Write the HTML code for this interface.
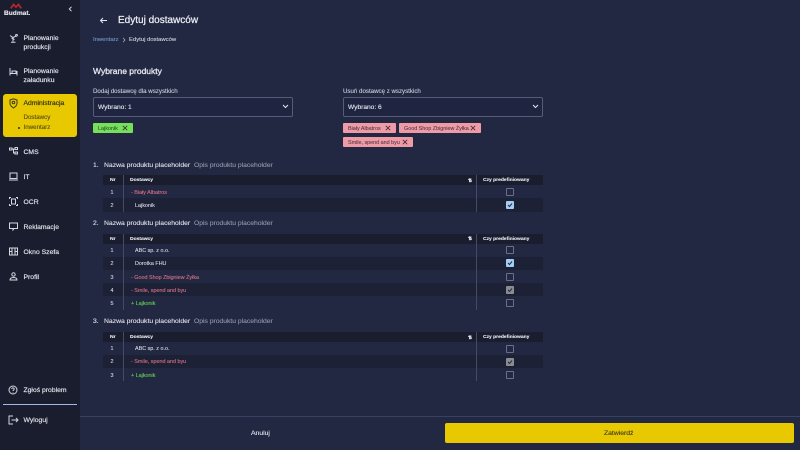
<!DOCTYPE html>
<html lang="pl"><head><meta charset="utf-8"><title>Edytuj dostawców</title>
<style>
*{box-sizing:border-box}
html,body{margin:0;padding:0}
body{width:800px;height:450px;overflow:hidden;background:#222842;font-family:"Liberation Sans",sans-serif;color:#e6e8ef;position:relative}
.a{position:absolute;white-space:nowrap;line-height:1;-webkit-text-stroke:.12px currentColor}
#side{position:absolute;left:0;top:0;width:80px;height:450px;background:#191d2e}
.nav{font-size:6.8px;color:#e4e6ec;left:23.5px;-webkit-text-stroke:.15px currentColor}
.ic{position:absolute;fill:none;stroke:#d5d8e0;stroke-width:1}
.sel{position:absolute;width:200px;height:20px;top:96.5px;border:1px solid #565c78;border-radius:2px;background:#1f2440}
.tag{position:absolute;height:10px;border-radius:1px;color:#5a3a48;font-size:5.4px;line-height:12px;padding-left:5px;background:#ef9ba6;white-space:nowrap;-webkit-text-stroke:.1px currentColor}
.tag svg{position:absolute;top:2px;width:6px;height:6px;fill:none;stroke:#3a2a35;stroke-width:.8}
.row{position:absolute;left:103px;width:440px}
.hd{background:#191d2e;height:10px}
.dk{background:#1d2135}
.h{font-size:4.95px;font-weight:bold;color:#e4e6ec;margin-top:1.5px}
.t{font-size:5.4px;color:#d3d6df;margin-top:1px}
.r{color:#d16f85}.g{color:#66cc55}
.sep{position:absolute;width:1px;background:#454b66}
.cb{position:absolute;left:506px;width:8px;height:8px;border:1px solid #6b7088;border-radius:1px}
.cb.b{background:#a3cdf3;border-color:#a3cdf3}
.cb.x{background:#8b8c90;border-color:#8b8c90}
.cb svg{position:absolute;left:0;top:0;width:6px;height:6px;fill:none;stroke:#222842;stroke-width:1}
.p1{font-size:6.8px;color:#e0e3ea;-webkit-text-stroke:.1px currentColor;margin-top:1.2px}
.p2{font-size:6.75px;color:#8f94a8;margin-top:1.2px}
</style></head><body>

<div id="side"></div>
<svg class="a" style="left:10px;top:3px" width="12" height="6" viewBox="0 0 12 6"><path d="M.8 5.4 L3.5 1.5 L6 4 L8.5 1.5 L11.2 5.4" fill="none" stroke="#b3262e" stroke-width="1.8"/></svg>
<div class="a" style="left:4px;top:10.5px;font-size:6.6px;font-weight:bold;color:#e8e9ee">Budmat.</div>
<svg class="a" style="left:68px;top:6px" width="5" height="6" viewBox="0 0 5 6"><path d="M3.5 .8 L1.3 3 L3.5 5.2" fill="none" stroke="#d5d8e0"/></svg>

<svg class="ic" style="left:9px;top:34px" width="9" height="9" viewBox="0 0 9 9"><circle cx="7.5" cy="1.3" r=".9"/><path d="M1 1.5 L4 3.5 L7 2 M4 3.5 V7.5 M2 8.3 H6.5 M2.5 4 L5.5 5.5"/></svg>
<div class="a nav" style="top:35.5px">Planowanie</div><div class="a nav" style="top:45.3px">produkcji</div>
<svg class="ic" style="left:9px;top:67px" width="9" height="9" viewBox="0 0 9 9"><path d="M1 1 V8.5 M8 4 V8.5 M1 6.5 H8 M3 6.5 V4 H7 V6.5"/></svg>
<div class="a nav" style="top:68.5px">Planowanie</div><div class="a nav" style="top:78px">załadunku</div>

<div style="position:absolute;left:3px;top:94px;width:74px;height:43px;background:#e8c800;border-radius:3px"></div>
<svg class="ic" style="left:9px;top:98px;stroke:#3a3a20" width="9" height="11" viewBox="0 0 9 11"><path d="M1 2 L4.5 .8 L8 2 V5.5 C8 7.5 6 9 4.5 10 C3 9 1 7.5 1 5.5 Z"/><circle cx="4.5" cy="4.5" r="1.3"/></svg>
<div class="a nav" style="top:101.3px;color:#2a2a1a">Administracja</div>
<div class="a" style="left:23.5px;top:115px;font-size:6.2px;color:#55501a">Dostawcy</div>
<div class="a" style="left:23.5px;top:125.2px;font-size:6.2px;color:#55501a">Inwentarz</div>
<div style="position:absolute;left:17.5px;top:126.7px;width:2px;height:2px;border-radius:50%;background:#2a2a55"></div>

<svg class="ic" style="left:9px;top:147px" width="9" height="8" viewBox="0 0 9 8"><rect x=".5" y="1" width="2.5" height="2"/><rect x="6" y=".5" width="2.5" height="2"/><rect x="6" y="5" width="2.5" height="2"/><path d="M3 2 H6 M4.5 2 V6 H6"/></svg>
<div class="a nav" style="top:149.5px">CMS</div>
<svg class="ic" style="left:9px;top:172px" width="9" height="9" viewBox="0 0 9 9"><rect x="1" y="1" width="7" height="5.5"/><path d="M0 8 H9"/></svg>
<div class="a nav" style="top:174.5px">IT</div>
<svg class="ic" style="left:9px;top:197px" width="9" height="9" viewBox="0 0 9 9"><path d="M.5 2 V.5 H2 M7 .5 H8.5 V2 M8.5 7 V8.5 H7 M2 8.5 H.5 V7"/><rect x="2.5" y="2" width="4" height="5"/></svg>
<div class="a nav" style="top:199.5px">OCR</div>
<svg class="ic" style="left:9px;top:222px" width="9" height="9" viewBox="0 0 9 9"><path d="M.5 1 H8.5 V6.5 H5 L4 8 V6.5 H.5 Z"/></svg>
<div class="a nav" style="top:224.5px">Reklamacje</div>
<svg class="ic" style="left:9px;top:247px" width="9" height="9" viewBox="0 0 9 9"><rect x=".5" y="1" width="8" height="7"/><path d="M3 1 V8 M6 1 V8 M.5 4.5 H3 M6 4.5 H8.5"/></svg>
<div class="a nav" style="top:249.5px">Okno Szefa</div>
<svg class="ic" style="left:9px;top:272px" width="9" height="9" viewBox="0 0 9 9"><circle cx="4.5" cy="2.5" r="1.7"/><path d="M1 8 C1 6 3 5.5 4.5 5.5 C6 5.5 8 6 8 8 Z"/></svg>
<div class="a nav" style="top:274.5px">Profil</div>

<svg class="ic" style="left:8px;top:385px" width="10" height="10" viewBox="0 0 10 10"><circle cx="5" cy="5" r="4"/><path d="M3.8 4 C3.8 2.5 6.2 2.5 6.2 4 C6.2 5 5 5 5 6 M5 7 V7.5"/></svg>
<div class="a nav" style="top:388px">Zgłoś problem</div>
<div style="position:absolute;left:3px;top:404px;width:74px;height:1px;background:#a3b8e8"></div>
<svg class="ic" style="left:8px;top:415px" width="11" height="10" viewBox="0 0 11 10"><path d="M5 1 H1 V9 H5 M3.5 5 H10 M8 3 L10 5 L8 7"/></svg>
<div class="a nav" style="top:418px">Wyloguj</div>

<svg class="a" style="left:99px;top:16.5px" width="9" height="7" viewBox="0 0 9 7"><path d="M8 3.5 H1.5 M4 1 L1.5 3.5 L4 6" fill="none" stroke="#e6e8ef"/></svg>
<div class="a" style="left:118px;top:16px;font-size:10px;color:#eceef3;-webkit-text-stroke:.25px currentColor">Edytuj dostawców</div>
<div class="a" style="left:93px;top:38px;font-size:5.9px;color:#6f95cc">Inwentarz</div>
<svg class="a" style="left:122px;top:37px" width="4" height="6" viewBox="0 0 4 6"><path d="M1 .8 L3 3 L1 5.2" fill="none" stroke="#bbb" stroke-width=".7"/></svg>
<div class="a" style="left:129px;top:38px;font-size:5.9px;color:#cfd2dc">Edytuj dostawców</div>
<div class="a" style="left:93px;top:66.5px;font-size:8.5px;color:#e6e8ef;-webkit-text-stroke:.3px currentColor">Wybrane produkty</div>

<div class="a" style="left:93px;top:88.5px;font-size:6.15px;color:#c5c8d4">Dodaj dostawcę dla wszystkich</div>
<div class="sel" style="left:93px"></div>
<div class="a" style="left:98px;top:105px;font-size:6.6px;color:#e6e8ef">Wybrano: 1</div>
<svg class="a" style="left:281.5px;top:104px" width="7" height="5" viewBox="0 0 7 5"><path d="M1 1 L3.5 3.5 L6 1" fill="none" stroke="#e6e8ef"/></svg>
<div class="tag" style="left:93px;top:123px;width:40px;background:#77e05a;color:#2e5a2a">Lajkonik<svg style="left:29px" viewBox="0 0 6 6"><path d="M.8 .8 L5.2 5.2 M5.2 .8 L.8 5.2"/></svg></div>

<div class="a" style="left:343px;top:88.5px;font-size:6.15px;color:#c5c8d4">Usuń dostawcę z wszystkich</div>
<div class="sel" style="left:343px"></div>
<div class="a" style="left:348px;top:105px;font-size:6.6px;color:#e6e8ef">Wybrano: 6</div>
<svg class="a" style="left:531.5px;top:104px" width="7" height="5" viewBox="0 0 7 5"><path d="M1 1 L3.5 3.5 L6 1" fill="none" stroke="#e6e8ef"/></svg>
<div class="tag" style="left:343px;top:123px;width:53px">Biały Albatros<svg style="left:42px" viewBox="0 0 6 6"><path d="M.8 .8 L5.2 5.2 M5.2 .8 L.8 5.2"/></svg></div>
<div class="tag" style="left:399px;top:123px;width:82px">Good Shop Zbigniew Żyłka<svg style="left:71px" viewBox="0 0 6 6"><path d="M.8 .8 L5.2 5.2 M5.2 .8 L.8 5.2"/></svg></div>
<div class="tag" style="left:343px;top:137px;width:70px">Smile, spend and byu<svg style="left:59px" viewBox="0 0 6 6"><path d="M.8 .8 L5.2 5.2 M5.2 .8 L.8 5.2"/></svg></div>

<!-- section 1 -->
<div class="a p1" style="left:93px;top:161.5px">1.</div><div class="a p1" style="left:104px;top:161.5px">Nazwa produktu placeholder</div><div class="a p2" style="left:194px;top:161.5px">Opis produktu placeholder</div>
<div class="row hd" style="top:175px"></div>
<div class="row dk" style="top:198px;height:14px"></div>
<div class="sep" style="left:123px;top:175px;height:37px"></div><div class="sep" style="left:476px;top:175px;height:37px"></div>
<div class="a h" style="left:110px;top:177.5px">Nr</div><div class="a h" style="left:130px;top:177.5px">Dostawcy</div><div class="a h" style="left:483px;top:177.5px">Czy predefiniowany</div>
<div class="a h" style="left:468px;top:177px;font-size:5px">⇅</div>
<div class="a t" style="left:110.5px;top:189.5px">1</div><div class="a t r" style="left:131px;top:189.5px">- Biały Albatros</div>
<div class="a t" style="left:110.5px;top:202.7px">2</div><div class="a t" style="left:135px;top:202.7px">Lajkonik</div>
<div class="cb" style="top:188px"></div>
<div class="cb b" style="top:201px"><svg viewBox="0 0 6 6"><path d="M1 3 L2.5 4.5 L5 1.5"/></svg></div>

<!-- section 2 -->
<div class="a p1" style="left:93px;top:220px">2.</div><div class="a p1" style="left:104px;top:220px">Nazwa produktu placeholder</div><div class="a p2" style="left:194px;top:220px">Opis produktu placeholder</div>
<div class="row hd" style="top:233.5px"></div>
<div class="row dk" style="top:257px;height:13px"></div>
<div class="row dk" style="top:283px;height:13px"></div>
<div class="sep" style="left:123px;top:233.5px;height:76.5px"></div><div class="sep" style="left:476px;top:233.5px;height:76.5px"></div>
<div class="a h" style="left:110px;top:236px">Nr</div><div class="a h" style="left:130px;top:236px">Dostawcy</div><div class="a h" style="left:483px;top:236px">Czy predefiniowany</div>
<div class="a h" style="left:468px;top:235.5px;font-size:5px">⇅</div>
<div class="a t" style="left:110.5px;top:248px">1</div><div class="a t" style="left:135px;top:248px">ABC sp. z o.o.</div>
<div class="a t" style="left:110.5px;top:261px">2</div><div class="a t" style="left:135px;top:261px">Dorotka FHU</div>
<div class="a t" style="left:110.5px;top:274.5px">3</div><div class="a t r" style="left:131px;top:274.5px">- Good Shop Zbigniew Żyłka</div>
<div class="a t" style="left:110.5px;top:288px">4</div><div class="a t r" style="left:131px;top:288px">- Smile, spend and byu</div>
<div class="a t" style="left:110.5px;top:301px">5</div><div class="a t g" style="left:131px;top:301px">+ Lajkonik</div>
<div class="cb" style="top:246px"></div>
<div class="cb b" style="top:259px"><svg viewBox="0 0 6 6"><path d="M1 3 L2.5 4.5 L5 1.5"/></svg></div>
<div class="cb" style="top:273px"></div>
<div class="cb x" style="top:286px"><svg viewBox="0 0 6 6"><path d="M1 3 L2.5 4.5 L5 1.5"/></svg></div>
<div class="cb" style="top:299px"></div>

<!-- section 3 -->
<div class="a p1" style="left:93px;top:318.3px">3.</div><div class="a p1" style="left:104px;top:318.3px">Nazwa produktu placeholder</div><div class="a p2" style="left:194px;top:318.3px">Opis produktu placeholder</div>
<div class="row hd" style="top:332px"></div>
<div class="row dk" style="top:355px;height:13px"></div>
<div class="sep" style="left:123px;top:332px;height:49px"></div><div class="sep" style="left:476px;top:332px;height:49px"></div>
<div class="a h" style="left:110px;top:334.5px">Nr</div><div class="a h" style="left:130px;top:334.5px">Dostawcy</div><div class="a h" style="left:483px;top:334.5px">Czy predefiniowany</div>
<div class="a h" style="left:468px;top:334px;font-size:5px">⇅</div>
<div class="a t" style="left:110.5px;top:346px">1</div><div class="a t" style="left:135px;top:346px">ABC sp. z o.o.</div>
<div class="a t" style="left:110.5px;top:359.3px">2</div><div class="a t r" style="left:131px;top:359.3px">- Smile, spend and byu</div>
<div class="a t" style="left:110.5px;top:372.5px">3</div><div class="a t g" style="left:131px;top:372.5px">+ Lajkonik</div>
<div class="cb" style="top:345px"></div>
<div class="cb x" style="top:358px"><svg viewBox="0 0 6 6"><path d="M1 3 L2.5 4.5 L5 1.5"/></svg></div>
<div class="cb" style="top:371px"></div>

<!-- footer -->
<div style="position:absolute;left:80px;top:416px;width:720px;height:1px;background:#3a4060"></div>
<div class="a" style="left:251px;top:431px;font-size:6.8px;color:#e4e6ec">Anuluj</div>
<div style="position:absolute;left:445px;top:423px;width:349px;height:20px;background:#e8c800;border-radius:2px"></div>
<div class="a" style="left:604px;top:431px;font-size:6.8px;color:#3a3a20">Zatwierdź</div>
</body></html>
